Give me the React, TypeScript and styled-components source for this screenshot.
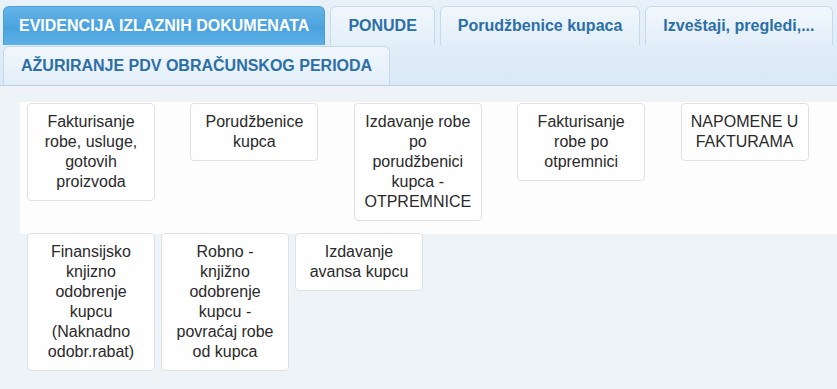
import styled, { createGlobalStyle } from 'styled-components';

const GlobalStyle = createGlobalStyle`
  body {
    margin: 0;
    background: #eef3f7;
    font-family: 'Liberation Sans', Arial, sans-serif;
  }
`;

const TabBar = styled.div`
  display: flex;
  flex-wrap: wrap;
  column-gap: 5px;
  row-gap: 1px;
  padding: 6px 3px 0;
  background: linear-gradient(to bottom, #e8f1fa 0%, #dbe9f6 100%);
  border-bottom: 1px solid #bcd0e2;
`;

const Tab = styled.div<{ $active?: boolean }>`
  height: 39px;
  box-sizing: border-box;
  display: flex;
  align-items: center;
  padding: 0 ${(p) => (p.$active ? '15px' : '17px')};
  font-size: 16px;
  font-weight: bold;
  border: 1px solid ${(p) => (p.$active ? '#4a9fd6' : '#c6d9ea')};
  border-bottom: none;
  border-radius: 6px 6px 0 0;
  color: ${(p) => (p.$active ? '#ffffff' : '#2c6fa6')};
  background: ${(p) =>
    p.$active
      ? 'linear-gradient(to bottom, #64b4e8 0%, #4aa2dd 55%, #5db0e6 100%)'
      : 'linear-gradient(to bottom, #f1f7fc 0%, #e2eef9 100%)'};
`;

const Panel = styled.div`
  margin: 16px 0 0 20px;
  padding: 1px 0 13px;
  background: #fdfdfd;
  display: grid;
  grid-template-columns: repeat(5, 1fr);
  align-items: start;
`;

const Cell = styled.div`
  padding-left: 7px;
`;

const Row = styled.div`
  display: flex;
  gap: 6px;
  margin: -1px 0 0 27px;
  align-items: flex-start;
`;

const Card = styled.div`
  width: 128px;
  box-sizing: border-box;
  padding: 8px 9px;
  background: #fefefe;
  border: 1px solid #dfe2e5;
  border-radius: 4px;
  color: #2a2a2a;
  font-size: 16px;
  line-height: 20px;
  text-align: center;
`;

const topTabs = [
  'EVIDENCIJA IZLAZNIH DOKUMENATA',
  'PONUDE',
  'Porudžbenice kupaca',
  'Izveštaji, pregledi,...',
  'AŽURIRANJE PDV OBRAČUNSKOG PERIODA',
];

const firstRow = [
  'Fakturisanje robe, usluge, gotovih proizvoda',
  'Porudžbenice kupca',
  'Izdavanje robe po porudžbenici kupca - OTPREMNICE',
  'Fakturisanje robe po otpremnici',
  'NAPOMENE U FAKTURAMA',
];

const secondRow = [
  'Finansijsko knjizno odobrenje kupcu (Naknadno odobr.rabat)',
  'Robno - knjižno odobrenje kupcu - povraćaj robe od kupca',
  'Izdavanje avansa kupcu',
];

export default function App() {
  return (
    <>
      <GlobalStyle />
      <TabBar>
        {topTabs.map((t, i) => (
          <Tab key={t} $active={i === 0}>
            {t}
          </Tab>
        ))}
      </TabBar>
      <Panel>
        {firstRow.map((t) => (
          <Cell key={t}>
            <Card>{t}</Card>
          </Cell>
        ))}
      </Panel>
      <Row>
        {secondRow.map((t) => (
          <Card key={t}>{t}</Card>
        ))}
      </Row>
    </>
  );
}
